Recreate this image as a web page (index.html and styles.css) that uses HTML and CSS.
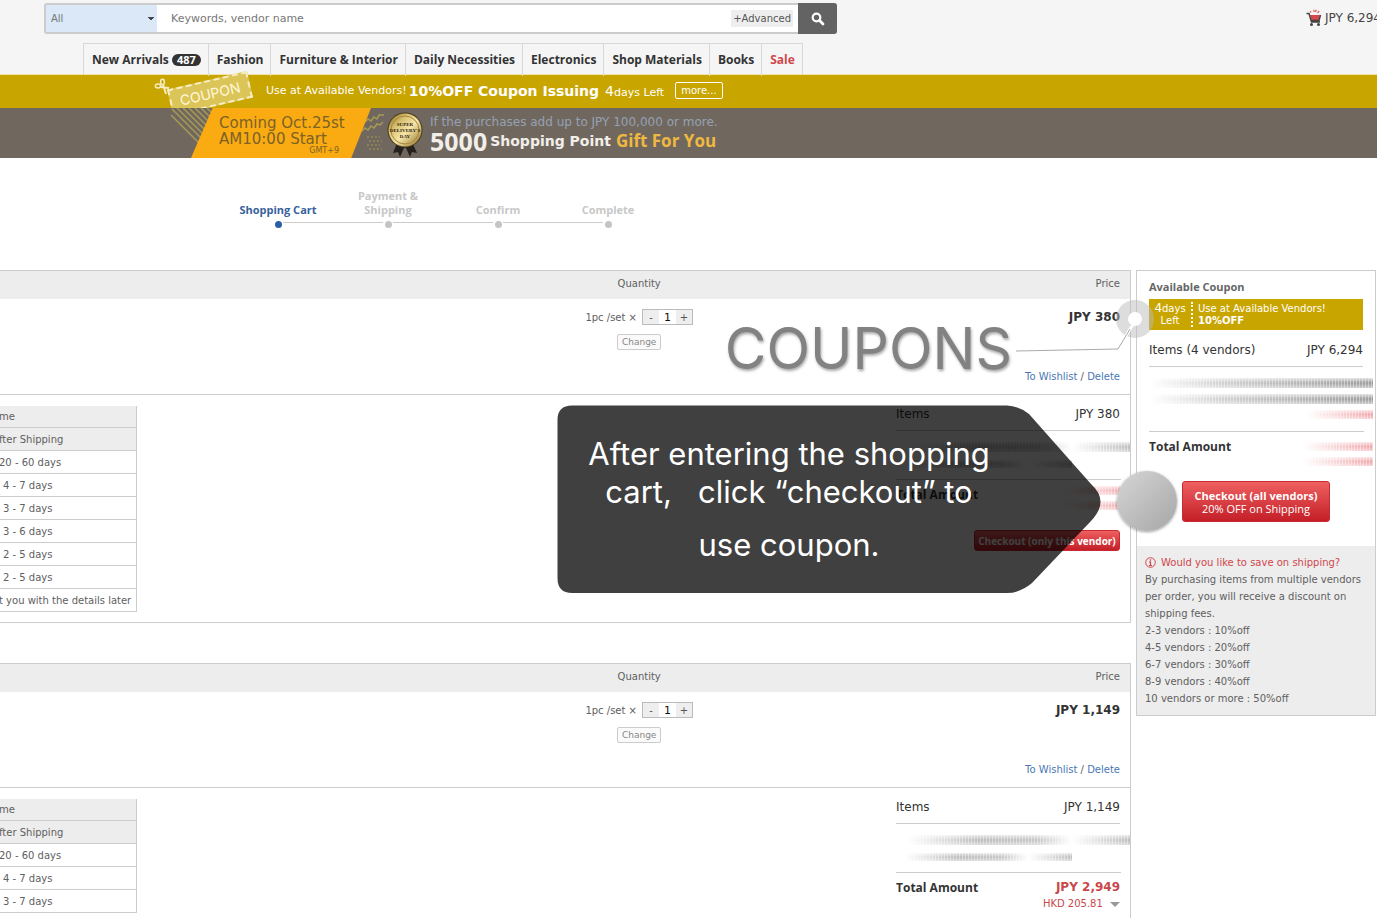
FILE: index.html
```html
<!DOCTYPE html>
<html lang="en">
<head>
  <meta charset="UTF-8">
  <meta name="viewport" content="width=device-width, initial-scale=1.0">
  <title>Shopping Cart</title>
  <link rel="stylesheet" href="styles.css">
</head>
<body>
  <header class="header">
    <div class="header-top">
      <form class="search">
        <select class="search-category" aria-label="Category">
          <option>All</option>
        </select>
        <input class="search-input" type="text" aria-label="Keywords" placeholder="Keywords, vendor name">
        <a class="search-advanced" href="#">+Advanced</a>
        <button class="search-button" type="button" aria-label="Search">
          <svg width="14" height="14" viewBox="0 0 14 14"><circle cx="5.5" cy="5.5" r="3.8" fill="none" stroke="#fff" stroke-width="2.2"/><path d="M8.5 8.5L12 12" stroke="#fff" stroke-width="2.8" stroke-linecap="round"/></svg>
        </button>
      </form>
      <a class="mini-cart" href="#">
        <svg width="16" height="18" viewBox="0 0 16 18">
          <path d="M4 6h10l-1.500 5.500h-7z" fill="#d9474a"/>
          <path d="M5 3.500L4.300 2M8 3V.8M9.500 3L10.200.8M11.500 4L13.200 2" stroke="#e0676a" stroke-width="1.300"/>
          <path d="M.5 4.500h2.500l2.500 8.500h8.500M14.500 6l-1.500 5.500H5.500" fill="none" stroke="#444" stroke-width="1.500"/>
          <circle cx="5.500" cy="15.500" r="1.500" fill="#444"/><circle cx="12.500" cy="15.500" r="1.500" fill="#444"/>
        </svg>
        JPY 6,294
      </a>
    </div>
    <nav class="nav">
      <a href="#">New Arrivals <span class="nav-count">487</span></a>
      <a href="#">Fashion</a>
      <a href="#">Furniture &amp; Interior</a>
      <a href="#">Daily Necessities</a>
      <a href="#">Electronics</a>
      <a href="#">Shop Materials</a>
      <a href="#">Books</a>
      <a class="nav-sale" href="#">Sale</a>
    </nav>
  </header>

  <div class="coupon-bar">
    <div class="ticket">
      <span class="ticket-body">COUPON</span>
      <svg class="ticket-scissors" width="18" height="18" viewBox="0 0 18 18" fill="none" stroke="#f6edc4" stroke-width="1.500">
        <ellipse cx="4" cy="8" rx="2.600" ry="2"/><ellipse cx="8.500" cy="4" rx="1.900" ry="2.700"/>
        <path d="M6 9L15 10M9 6.500L12 16" stroke-width="2"/>
      </svg>
    </div>
    <span class="coupon-lead">Use at Available Vendors!</span>
    <strong class="coupon-title">10%OFF Coupon Issuing</strong>
    <span class="coupon-left"><big>4</big>days Left</span>
    <a class="coupon-more" href="#">more...</a>
  </div>

  <div class="promo">
    <svg class="promo-stripes" width="50" height="50" viewBox="0 0 50 50" stroke="#a79a55" stroke-width="1.500">
      <path d="M1 7L44 50M2 1L46 45M7 0L50 43M13 0L50 37M19 0L50 31M25 0L50 25M31 0L50 19M37 0L50 13"/>
    </svg>
    <div class="promo-date">
      <span>Coming Oct.25st</span>
      <span>AM10:00 Start</span>
      <small>GMT+9</small>
    </div>
    <svg class="promo-waves" width="24" height="50" viewBox="0 0 24 50" fill="none" stroke="#a79a55" stroke-width="1.500">
      <path d="M3 14l3-3 3 2 3-4 3 2 2-4 5 0M0 23l3-3 3 2 3-4 3 2 3-4 3 1 3-3"/>
      <path d="M5 29h13M7 33h13M5 37h13M7 41h13" stroke-dasharray="2 2" stroke-width="1"/>
    </svg>
    <svg class="promo-medal" width="36" height="50" viewBox="0 0 36 50">
      <defs>
        <linearGradient id="gold" x1="0" y1="0" x2="1" y2="1">
          <stop offset="0" stop-color="#8c6c20"/><stop offset=".3" stop-color="#d8c070"/><stop offset=".55" stop-color="#f5e5a8"/><stop offset="1" stop-color="#8a6a1e"/>
        </linearGradient>
      </defs>
      <path d="M10 35L6 45l5-1 2 5 4-9 2 0 4 9 2-5 5 1-5-11z" fill="#24211f"/>
      <circle cx="18" cy="22" r="17.500" fill="#4a3b1a"/>
      <circle cx="18" cy="22" r="16.500" fill="url(#gold)"/>
      <circle cx="18" cy="22" r="14" fill="none" stroke="#a5863a" stroke-width="1"/>
      <g class="medal-text" text-anchor="middle"><text x="18" y="18">SUPER</text><text x="18" y="24">DELIVERY'S</text><text x="18" y="30">DAY</text></g>
    </svg>
    <div class="promo-copy">
      <span class="promo-cond">If the purchases add up to JPY 100,000 or more.</span>
      <div class="promo-gift"><b class="promo-points">5000</b> <b class="promo-label">Shopping Point</b> <b class="promo-you">Gift For You</b></div>
    </div>
  </div>

  <ol class="steps">
    <li class="current">Shopping Cart</li>
    <li>Payment &amp;<br>Shipping</li>
    <li>Confirm</li>
    <li>Complete</li>
  </ol>

  <main class="cart">
    <div class="vendors">
      <section class="vendor">
        <div class="row vendor-head"><span></span><span>Quantity</span><span class="right">Price</span></div>
        <div class="row item">
          <span></span>
          <div class="quantity">
            <div class="stepper-line">1pc /set ×
              <span class="stepper"><button type="button">-</button><input type="text" value="1" aria-label="Quantity"><button type="button">+</button></span>
            </div>
            <button class="change" type="button">Change</button>
          </div>
          <div class="item-price">
            <b>JPY 380</b>
            <span><a href="#">To Wishlist</a> / <a href="#">Delete</a></span>
          </div>
        </div>
        <div class="vendor-foot">
          <table class="shipping">
            <tr><th>me</th></tr>
            <tr><th>fter Shipping</th></tr>
            <tr><td>20 - 60 days</td></tr>
            <tr><td class="indent">4 - 7 days</td></tr>
            <tr><td class="indent">3 - 7 days</td></tr>
            <tr><td class="indent">3 - 6 days</td></tr>
            <tr><td class="indent">2 - 5 days</td></tr>
            <tr><td class="indent">2 - 5 days</td></tr>
            <tr><td>t you with the details later</td></tr>
          </table>
          <div class="summary">
            <div class="summary-items"><span>Items</span><span>JPY 380</span></div>
            <div class="smudges"><i class="smudge"></i><i class="smudge thin"></i></div>
            <div class="summary-total"><b>Total Amount</b><div class="hidden-amount"><i class="smudge red"></i><i class="smudge red"></i></div></div>
            <button class="checkout checkout-small" type="button">Checkout (only this vendor)</button>
          </div>
        </div>
      </section>

      <section class="vendor">
        <div class="row vendor-head"><span></span><span>Quantity</span><span class="right">Price</span></div>
        <div class="row item">
          <span></span>
          <div class="quantity">
            <div class="stepper-line">1pc /set ×
              <span class="stepper"><button type="button">-</button><input type="text" value="1" aria-label="Quantity"><button type="button">+</button></span>
            </div>
            <button class="change" type="button">Change</button>
          </div>
          <div class="item-price">
            <b>JPY 1,149</b>
            <span><a href="#">To Wishlist</a> / <a href="#">Delete</a></span>
          </div>
        </div>
        <div class="vendor-foot">
          <table class="shipping">
            <tr><th>me</th></tr>
            <tr><th>fter Shipping</th></tr>
            <tr><td>20 - 60 days</td></tr>
            <tr><td class="indent">4 - 7 days</td></tr>
            <tr><td class="indent">3 - 7 days</td></tr>
          </table>
          <div class="summary">
            <div class="summary-items"><span>Items</span><span>JPY 1,149</span></div>
            <div class="smudges"><i class="smudge"></i><i class="smudge thin"></i></div>
            <div class="summary-total"><b>Total Amount</b><div class="amount"><b>JPY 2,949</b><span>HKD 205.81 <i class="caret"></i></span></div></div>
          </div>
        </div>
      </section>
    </div>

    <aside class="sidebar">
      <div class="sidebar-main">
        <h2>Available Coupon</h2>
        <a class="side-coupon" href="#">
          <span class="side-days"><big>4</big>days<br>Left</span>
          <span class="side-text">Use at Available Vendors!<br><b>10%OFF</b></span>
        </a>
        <div class="side-items"><span>Items (4 vendors)</span><span>JPY 6,294</span></div>
        <div class="smudges side-smudges"><i class="smudge dark"></i><i class="smudge dark"></i><i class="smudge red"></i></div>
        <div class="summary-total side-total"><b>Total Amount</b><div class="hidden-amount"><i class="smudge red"></i><i class="smudge red"></i></div></div>
        <button class="checkout checkout-all" type="button"><b>Checkout (all vendors)</b><span>20% OFF on Shipping</span></button>
      </div>
      <div class="saving">
        <h3><svg width="11" height="11" viewBox="0 0 11 11"><circle cx="5.500" cy="5.500" r="4.800" fill="none" stroke="#d0474c"/><path d="M5.500 2.200v1.500M4.200 4.800h1.300v3.500M4 8.500h3" fill="none" stroke="#d0474c" stroke-width="1.200"/></svg> Would you like to save on shipping?</h3>
        <p>By purchasing items from multiple vendors per order, you will receive a discount on shipping fees.</p>
        <ul>
          <li>2-3 vendors : 10%off</li>
          <li>4-5 vendors : 20%off</li>
          <li>6-7 vendors : 30%off</li>
          <li>8-9 vendors : 40%off</li>
          <li>10 vendors or more : 50%off</li>
        </ul>
      </div>
    </aside>

    <!-- guide notes lying over the cart -->
    <div class="note-title">COUPONS</div>
    <svg class="note-pointer" width="140" height="56" viewBox="0 0 140 56">
      <circle cx="119" cy="20" r="19" fill="#bbb" fill-opacity=".5"/>
      <path d="M103 48L119 22" fill="none" stroke="#fff" stroke-width="3"/>
      <path d="M0 52L102 50L114 30" fill="none" stroke="#aaa"/>
      <circle cx="119" cy="20" r="7" fill="#fff"/>
    </svg>
    <div class="note">
      <svg class="note-shape" viewBox="0 0 545 190" preserveAspectRatio="none">
        <path d="M15 .5H450Q462 1 472 9L534 79Q553 96 534 116L475 178Q463 188 450 188H15Q.5 188 .5 173V15Q.5 .5 15 .5z" fill="#000" fill-opacity=".75"/>
      </svg>
      <p>After entering the shopping<br>cart, &nbsp; click “checkout” to</p>
      <p>use coupon.</p>
    </div>
    <span class="note-dot"></span>
  </main>
</body>
</html>
```
FILE: styles.css
```css
* {
  box-sizing: border-box;
}
body {
  margin: 0;
  height: 100vh;
  overflow: hidden;
  background: #fff;
  color: #606060;
  font-family: "DejaVu Sans", Verdana, sans-serif;
  font-size: 10px;
}
a {
  color: inherit;
  text-decoration: none;
}
button, input, select {
  font-family: inherit;
  font-size: inherit;
}
b, strong, h2, .nav {
  font-family: "Open Sans", Verdana, sans-serif;
  font-weight: bold;
}

/* header */
.header {
  height: 75px;
  background: #f5f5f5;
  border-bottom: 1px solid #f0e3a8;
}
.header-top {
  display: flex;
  justify-content: space-between;
  padding: 3px 0 0 44px;
}
.search {
  display: flex;
  align-items: center;
  width: 793px;
  height: 31px;
  background: #fff;
  border: 2px solid #ccc;
  border-right: 0;
  border-radius: 3px;
}
.search-category {
  appearance: none;
  width: 111px;
  height: 27px;
  padding: 0 5px;
  border: 0;
  border-radius: 0;
  color: #777;
  background: linear-gradient(45deg, transparent 50%, #445 50%) 102px 12px / 3px 4px no-repeat, linear-gradient(-45deg, transparent 50%, #445 50%) 105px 12px / 3px 4px no-repeat, #dae8f8;
}
.search-input {
  flex: 1;
  min-width: 0;
  border: 0;
  padding: 0 14px;
  font-size: 11px;
  outline: none;
}
.search-input::placeholder {
  color: #777;
}
.search-advanced {
  margin-right: 5px;
  padding: 0 2px;
  background: #eee;
  color: #555;
  font-size: 10px;
  line-height: 17px;
}
.search-button {
  display: flex;
  align-items: center;
  justify-content: center;
  width: 39px;
  height: 31px;
  padding: 0;
  border: 0;
  border-radius: 0 3px 3px 0;
  background: #636363;
}
.mini-cart {
  display: flex;
  align-items: center;
  gap: 3px;
  height: 30px;
  margin-right: -4px;
  color: #444;
  font-size: 12px;
  white-space: nowrap;
}
.nav {
  display: flex;
  width: max-content;
  margin: 9px 0 0 83px;
  border: 1px solid #d8d8d8;
  border-bottom: 0;
  font-size: 12px;
  line-height: 32px;
  color: #333;
}
.nav a {
  padding: 0 7px 0 8px;
}
.nav a + a {
  border-left: 1px solid #d8d8d8;
}
.nav-count {
  display: inline-block;
  padding: 0 5px;
  border-radius: 6px;
  background: #333;
  color: #fff;
  font-size: 11px;
  line-height: 12px;
}
.nav .nav-sale {
  color: #d0474c;
}

/* banners */
.coupon-bar {
  display: flex;
  align-items: center;
  height: 33px;
  padding: 0 0 2px 157px;
  background: #c9a500;
  color: #fff;
}
.ticket {
  position: relative;
  width: 109px;
  height: 31px;
}
.ticket-body {
  position: absolute;
  left: 12px;
  top: 5px;
  width: 82px;
  border: 2px dashed #f6edc4;
  background: #dcc558;
  color: #fff8dc;
  font: 14px/23px Inter, sans-serif;
  text-align: center;
  transform: rotate(-13deg);
}
.ticket-scissors {
  position: absolute;
  left: -3px;
  top: 3px;
}
.coupon-lead {
  font-size: 11px;
}
.coupon-title {
  margin-left: 2px;
  font-family: "DejaVu Sans", Verdana, sans-serif;
  font-size: 14px;
}
.coupon-left {
  margin-left: 6px;
  font-size: 11px;
}
.coupon-left big {
  font-size: 14px;
}
.coupon-more {
  margin-left: 11px;
  padding: 0 5px;
  border: 1px solid #fff;
  border-radius: 2px;
  font-size: 10px;
  line-height: 15px;
}
.promo {
  position: relative;
  display: flex;
  height: 50px;
  padding-left: 191px;
  background: #70685e;
}
.promo-stripes {
  position: absolute;
  left: 170px;
  top: 0;
}
.promo-date {
  position: relative;
  display: flex;
  flex-direction: column;
  width: 180px;
  padding: 7px 32px 0 28px;
  background: #faab12;
  clip-path: polygon(12% 0, 100% 0, 89% 100%, 0 100%);
  color: #7b6226;
  font-size: 15px;
  line-height: 16px;
  white-space: nowrap;
}
.promo-date small {
  align-self: flex-end;
  font-size: 8px;
  line-height: 8px;
}
.promo-waves {
  margin-left: -9px;
}
.promo-medal {
  margin-left: 1px;
}
.medal-text {
  font: bold 5px "Liberation Serif", serif;
  fill: #2d240f;
}
.promo-copy {
  padding: 6px 0 0 7px;
}
.promo-cond {
  display: block;
  color: #96a0b4;
  font-size: 12px;
  line-height: 16px;
}
.promo-gift {
  display: flex;
  align-items: center;
  gap: 3px;
  color: #f2efea;
  line-height: 22px;
}
.promo-points {
  font-size: 25px;
}
.promo-label {
  font-family: "DejaVu Sans", Verdana, sans-serif;
  font-size: 14px;
}
.promo-you {
  margin-left: 2px;
  color: #f0b840;
  font-size: 17px;
}

/* progress */
.steps {
  display: flex;
  height: 112px;
  margin: 0;
  padding: 31px 0 0 223px;
  list-style: none;
}
.steps li {
  position: relative;
  display: flex;
  align-items: flex-end;
  justify-content: center;
  width: 110px;
  height: 28px;
  color: #c8c8c8;
  font: bold 11px/14px "Open Sans", Verdana, sans-serif;
  text-align: center;
}
.steps li::after {
  content: "";
  position: absolute;
  left: 52px;
  top: 32px;
  width: 7px;
  height: 7px;
  border-radius: 50%;
  background: #c4c4c4;
}
.steps li + li::before {
  content: "";
  position: absolute;
  right: 60px;
  top: 33px;
  width: 100px;
  border-top: 1px solid #ccc;
}
.steps .current {
  color: #36619c;
}
.steps .current::after {
  background: #2a5fa8;
}

/* cart */
.cart {
  position: relative;
  display: flex;
  align-items: flex-start;
  gap: 5px;
  padding-right: 1px;
}
.vendors {
  flex: 1;
}
.vendor {
  margin-bottom: 40px;
  border: 1px solid #ccc;
  border-left: 0;
}
.row {
  display: grid;
  grid-template-columns: 51% 136px 1fr;
  padding-right: 10px;
}
.vendor-head {
  height: 28px;
  background: #ededed;
  line-height: 25px;
  text-align: center;
}
.right {
  text-align: right;
}
.item {
  height: 96px;
  padding-top: 10px;
  border-bottom: 1px solid #ccc;
}
.quantity {
  text-align: center;
}
.stepper-line {
  display: flex;
  align-items: center;
  justify-content: center;
  gap: 5px;
  margin-bottom: 9px;
  white-space: nowrap;
}
.stepper {
  display: flex;
  width: 51px;
  height: 16px;
  border: 1px solid #bbb;
}
.stepper button, .stepper input {
  width: 16px;
  padding: 0;
  border: 0;
  background: #eee;
  color: #555;
  text-align: center;
}
.stepper input {
  width: 17px;
  background: #fff;
  color: #111;
  font-size: 11px;
}
.change {
  width: 44px;
  height: 16px;
  padding: 0;
  border: 1px solid #ccc;
  border-radius: 2px;
  background: #fafafa;
  color: #888;
  font-size: 9px;
}
.item-price {
  display: flex;
  flex-direction: column;
  justify-content: space-between;
  padding-bottom: 12px;
  text-align: right;
}
.item-price b, .amount b {
  font-family: "DejaVu Sans", Verdana, sans-serif;
}
.item-price b {
  color: #333;
  font-size: 12px;
  line-height: 16px;
}
.item-price a {
  color: #4a78b5;
}
.vendor-foot {
  display: flex;
  align-items: flex-start;
  justify-content: space-between;
  padding: 11px 10px 10px 0;
}
.shipping {
  width: 140px;
  margin-left: -3px;
  border: 1px solid #ccc;
  border-top: 0;
  border-spacing: 0;
  border-bottom: 0;
}
.shipping th, .shipping td {
  height: 23px;
  padding: 0 0 0 1px;
  border-bottom: 1px solid #ccc;
  font-weight: normal;
  text-align: left;
  white-space: nowrap;
}
.shipping th {
  background: #ededed;
}
.shipping tr:first-child th {
  height: 22px;
}
.shipping .indent {
  padding-left: 5px;
}
.summary {
  display: flex;
  flex-direction: column;
  width: 224px;
}
.summary-items, .side-items, .summary-total {
  display: flex;
  justify-content: space-between;
  color: #333;
  font-size: 12px;
}
.summary-items {
  height: 25px;
  border-bottom: 1px solid #ccc;
  line-height: 16px;
}
.summary-total {
  padding-top: 6px;
}
.summary-total b {
  font-size: 12px;
  line-height: 17px;
}
.amount {
  color: #c8484c;
  text-align: right;
}
.amount b {
  display: block;
}
.amount span {
  font-size: 10px;
  line-height: 12px;
}
.caret {
  display: inline-block;
  margin-left: 4px;
  border: 5px solid transparent;
  border-top-color: #999;
  border-bottom: 0;
}

/* smeared out amounts */
.smudges {
  display: flex;
  flex-direction: column;
  gap: 8px;
  height: 49px;
  margin-right: -10px;
  padding-top: 11px;
  border: 0 solid;
  border-image: linear-gradient(to right, #ccc 224px, transparent 224px) 1;
  border-bottom-width: 1px;
}
.smudge {
  height: 10px;
  background: repeating-linear-gradient(to right, rgba(255, 255, 255, 0.4) 0 1px, transparent 1px 3px), linear-gradient(to right, transparent 5%, #bbb 35%, #c4c4c4 60%, transparent 75%, #bbb 100%);
  mask-image: linear-gradient(rgba(0, 0, 0, 0.3), #000 50%, rgba(0, 0, 0, 0.5));
}
.smudge.thin {
  width: 75%;
  height: 8px;
}
.smudge.dark {
  background: repeating-linear-gradient(to right, rgba(255, 255, 255, 0.4) 0 1px, transparent 1px 3px), linear-gradient(to right, transparent, #ccc 35%, #999);
}
.smudge.red {
  height: 9px;
  background: repeating-linear-gradient(to right, rgba(255, 255, 255, 0.4) 0 1px, transparent 1px 3px), linear-gradient(to right, transparent, #f0a4a8);
}
.hidden-amount {
  display: flex;
  flex-direction: column;
  gap: 6px;
  width: 70px;
  margin-right: -10px;
}
.checkout {
  border: 1px solid #c92a32;
  border-radius: 3px;
  background: linear-gradient(#ee6060, #c41f28);
  color: #fff;
}
.checkout-small {
  align-self: flex-end;
  width: 146px;
  height: 21px;
  margin-top: 20px;
  padding: 0;
  font: bold 10px "Open Sans", sans-serif;
}

/* sidebar */
.sidebar {
  width: 240px;
  border: 1px solid #ccc;
}
.sidebar-main {
  display: flex;
  flex-direction: column;
  height: 275px;
  padding: 8px 12px 0;
}
.sidebar h2 {
  margin: 0 0 5px;
  color: #666;
  font-size: 11px;
  line-height: 15px;
}
.side-coupon {
  display: flex;
  align-items: center;
  height: 31px;
  background: #c9a500;
  color: #fff;
  line-height: 12px;
}
.side-days {
  width: 44px;
  border-right: 2px dotted #fff;
  text-align: center;
}
.side-days big {
  font-size: 12px;
}
.side-text {
  padding-left: 5px;
  white-space: nowrap;
}
.side-text b {
  font-family: "DejaVu Sans", Verdana, sans-serif;
}
.side-items {
  height: 37px;
  border-bottom: 1px solid #ccc;
  line-height: 40px;
}
.side-smudges {
  gap: 6px;
  height: 65px;
  border-image: linear-gradient(to right, #ccc 214px, transparent 214px) 1;
}
.side-smudges .red {
  width: 66px;
  align-self: flex-end;
}
.side-total .hidden-amount {
  padding-top: 4px;
}
.checkout-all {
  display: flex;
  flex-direction: column;
  align-items: center;
  justify-content: center;
  align-self: center;
  width: 148px;
  height: 41px;
  margin-top: 15px;
  padding: 0;
  font: 11px/13px "Open Sans", sans-serif;
}
.saving {
  padding: 8px 8px 8px;
  background: #ededed;
  line-height: 17px;
}
.saving h3 {
  display: flex;
  align-items: center;
  gap: 5px;
  margin: 0;
  color: #d0474c;
  font-size: 10px;
  font-weight: normal;
}
.saving p, .saving ul {
  margin: 0;
  padding: 0;
  list-style: none;
}

/* guide notes */
.note-title {
  position: absolute;
  right: 365px;
  top: 45px;
  color: #828282;
  font: 57px/68px Inter, sans-serif;
  text-shadow: 1px 2px 3px rgba(0, 0, 0, 0.35);
}
.note-pointer {
  position: absolute;
  right: 221px;
  top: 29px;
}
.note {
  position: absolute;
  right: 275px;
  top: 135px;
  width: 545px;
  height: 190px;
  padding: 30px 109px 0 28px;
  color: #fff;
  font: 31px/38px Inter, sans-serif;
  text-align: center;
  white-space: nowrap;
}
.note-shape {
  position: absolute;
  left: 0;
  top: 0;
  width: 100%;
  height: 100%;
}
.note p {
  position: relative;
  margin: 0 0 15px;
}
.note-dot {
  position: absolute;
  right: 200px;
  top: 201px;
  width: 60px;
  height: 60px;
  border-radius: 50%;
  background: linear-gradient(135deg, #d6d6d6, #a6a6a6);
  box-shadow: 0 1px 3px rgba(0, 0, 0, 0.4);
}
```
